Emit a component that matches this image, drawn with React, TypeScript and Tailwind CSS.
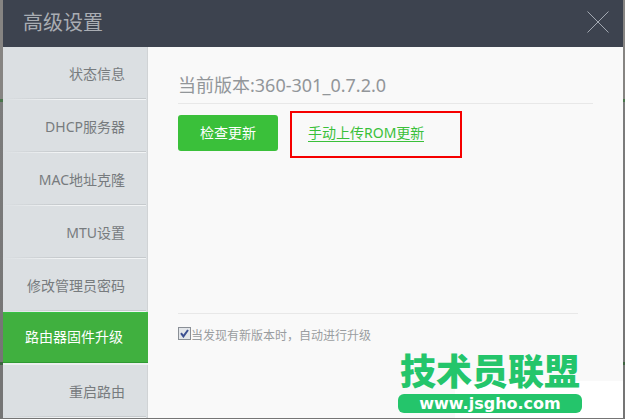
import { useState } from 'react';

type Item = { id: string; label: string };

const items: Item[] = [
  { id: 'status', label: '状态信息' },
  { id: 'dhcp', label: 'DHCP服务器' },
  { id: 'mac', label: 'MAC地址克隆' },
  { id: 'mtu', label: 'MTU设置' },
  { id: 'password', label: '修改管理员密码' },
  { id: 'firmware', label: '路由器固件升级' },
  { id: 'reboot', label: '重启路由' },
];

function Header() {
  return (
    <header className="flex h-[47px] items-center justify-between bg-[#3d434f] pr-[14px] pl-5">
      <h1 className="pb-0.5 text-xl leading-7 text-[#a9adb3]">高级设置</h1>
      <button type="button" aria-label="关闭" className="pb-1 text-[#a3a9b2]">
        <svg width="22" height="22" viewBox="0 0 22 22" stroke="currentColor" strokeWidth="1" className="block">
          <path d="M0.5 0.5 21.5 21.5M21.5 0.5 0.5 21.5" />
        </svg>
      </button>
    </header>
  );
}

function Divider() {
  return (
    <>
      <div className="mr-px h-px bg-linear-to-r from-[#dbdfe2] to-[#c6cacd] to-40%" />
      <div className="mr-px h-px bg-linear-to-r from-[#dbdfe2] to-[#f2f4f5] to-40%" />
    </>
  );
}

function Sidebar({ active, onSelect }: { active: string; onSelect: (id: string) => void }) {
  return (
    <nav className="w-[145px] shrink-0 border-r border-[#d0d3d5] bg-[#dbdfe2]">
      <ul>
        {items.map((item) =>
          item.id === active ? (
            <li key={item.id} className="-mr-px border-b-2 border-[#eceff0]">
              <button
                type="button"
                aria-current="page"
                onClick={() => onSelect(item.id)}
                className="block h-[51px] w-full border-t border-b border-t-[#36c043] border-b-[#2f9a33] bg-[#40b03f] pr-[25px] pb-0.5 text-right text-sm text-white"
              >
                {item.label}
              </button>
            </li>
          ) : (
            <li key={item.id}>
              <button
                type="button"
                onClick={() => onSelect(item.id)}
                className="block h-[51px] w-full pt-0.5 pr-[22px] text-right text-sm text-[#777b7e]"
              >
                {item.label}
              </button>
              <Divider />
            </li>
          ),
        )}
      </ul>
    </nav>
  );
}

function Watermark() {
  return (
    <div className="absolute right-0 bottom-0 h-[37px] w-[168px] bg-white">
      <div className="absolute right-[41px] bottom-[5px] flex w-[184px] flex-col items-center gap-1 text-center whitespace-nowrap">
        <div className="text-4xl leading-9 font-black text-[#24c56b]">技术员联盟</div>
        <div className="flex h-[19px] w-full items-center justify-center rounded-md bg-[#24c56b] font-['DejaVu_Sans',sans-serif] text-base leading-4 font-bold text-white">
          www.jsgho.com
        </div>
      </div>
    </div>
  );
}

export default function App() {
  const [active, setActive] = useState('firmware');
  const [auto, setAuto] = useState(true);

  return (
    <div className="flex min-h-screen flex-col bg-[linear-gradient(#868482_99px,#4a754c_99px,#4a754c_102px,#7c7c7c_102px,#757575_362px,#3f6541_362px,#3f6541_365px,#757575_365px)] pr-0.5 pb-px pl-[3px] font-['Noto_Sans','Noto_Sans_CJK_SC',sans-serif]">
      <Header />
      <div className="relative flex grow bg-[#f9f9f9]">
        <Sidebar active={active} onSelect={setActive} />
        <main className="flex grow flex-col pr-[30px] pl-[30px]">
          <h2 className="mt-[25px] border-b border-[#e8e8e8] pb-[5px] text-lg leading-[26px] text-[#929699]">
            当前版本:360-301_0.7.2.0
          </h2>
          <div className="mt-[7px] flex gap-3">
            <button type="button" className="mt-1 h-9 w-[100px] rounded-[3px] bg-[#3ac03a] text-sm text-white">
              检查更新
            </button>
            <div className="flex h-[47px] w-[172px] items-center border-2 border-[#f60000] pb-1 pl-4">
              <a href="#upload" className="border-b border-[#3ac03a] text-sm leading-[17px] text-[#3ac03a]">
                手动上传ROM更新
              </a>
            </div>
          </div>
          <div className="mt-[155px] mr-[15px] border-t border-[#e8e8e8] pt-3">
            <label className="flex w-fit items-start text-xs leading-5 text-[#999da0]">
              <input
                type="checkbox"
                checked={auto}
                onChange={(e) => setAuto(e.target.checked)}
                className="peer sr-only"
              />
              <span className="mt-px flex size-[13px] items-center justify-center border border-[#8a8f96] bg-[#e3e6ea] text-transparent peer-checked:text-[#3b4f91]">
                <svg width="9" height="9" viewBox="0 0 9 9" fill="none" stroke="currentColor" strokeWidth="2">
                  <path d="M1 4.2 3.4 7.4 8 1" />
                </svg>
              </span>
              当发现有新版本时，自动进行升级
            </label>
          </div>
        </main>
        <Watermark />
      </div>
    </div>
  );
}
